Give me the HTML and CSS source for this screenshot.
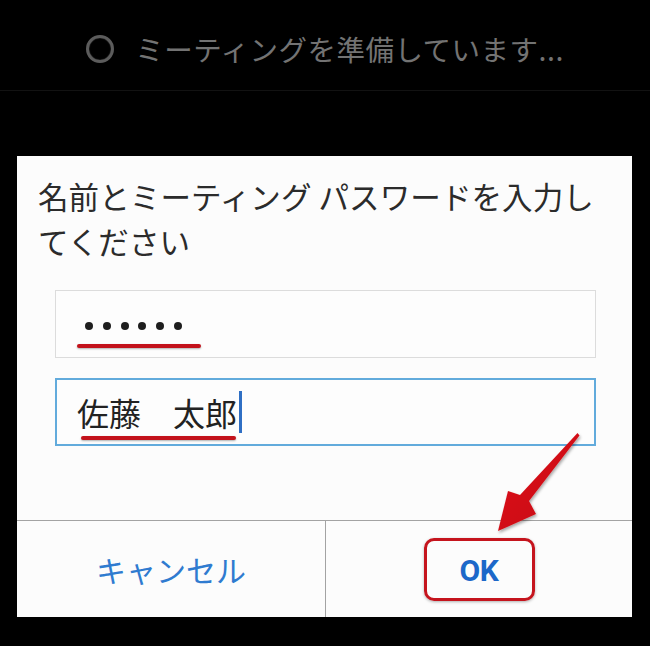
FILE: index.html
```html
<!DOCTYPE html>
<html lang="ja">
<head>
<meta charset="utf-8">
<title>ミーティング</title>
<link rel="stylesheet" href="styles.css">
</head>
<body>
<div class="screen">
  <header class="topbar">
    <span class="spinner"></span>
    <span class="status">ミーティングを準備しています...</span>
  </header>

  <section class="dialog">
    <h1 class="title">名前とミーティング パスワードを入力してください</h1>

    <div class="field">
      <div class="dots">
        <span class="dot"></span><span class="dot"></span><span class="dot"></span><span class="dot"></span><span class="dot"></span><span class="dot"></span>
      </div>
      <div class="mark mark-pass"></div>
    </div>

    <div class="field field-active">
      <div class="name"><span class="name-text">佐藤　太郎</span><span class="caret"></span></div>
      <div class="mark mark-name"></div>
    </div>

    <div class="actions">
      <div class="action"><span class="cancel">キャンセル</span></div>
      <div class="action action-ok"><span class="ok-box"><span class="ok">OK</span></span></div>
    </div>
  </section>

  <svg class="arrow" width="650" height="646" viewBox="0 0 650 646" aria-hidden="true">
    <defs>
      <filter id="sh" x="-20%" y="-20%" width="140%" height="140%">
        <feDropShadow dx="1" dy="2" stdDeviation="1.5" flood-color="#000" flood-opacity="0.35"/>
      </filter>
      <linearGradient id="rg" x1="0" y1="0" x2="1" y2="1">
        <stop offset="0" stop-color="#e0141e"/>
        <stop offset="1" stop-color="#c40a12"/>
      </linearGradient>
    </defs>
    <polygon filter="url(#sh)" fill="url(#rg)" points="577.5,433 579.5,435.5 529,501 536,514 498,531 508,491 520,495"/>
  </svg>
</div>
</body>
</html>
```

FILE: styles.css
```css
* { box-sizing: border-box; }

html, body {
  margin: 0;
  padding: 0;
  background: #000;
}

.screen {
  position: relative;
  width: 650px;
  height: 646px;
  background: #000;
  overflow: hidden;
  font-family: "Noto Sans CJK JP", "Noto Sans", sans-serif;
}

.topbar {
  height: 91px;
  padding-top: 8px;
  border-bottom: 1px solid #121212;
  display: flex;
  align-items: center;
  justify-content: center;
  gap: 21px;
}

.spinner {
  width: 28px;
  height: 28px;
  border-radius: 50%;
  border: 3px solid #5c5c5c;
  box-shadow: inset 0 0 1px #888;
  flex: none;
}

.status {
  font-size: 28.5px;
  color: #737373;
  letter-spacing: 0.5px;
  line-height: 1;
}

.dialog {
  margin: 65px 0 0 17px;
  width: 615px;
  height: 461px;
  background: #fcfcfc;
  display: flex;
  flex-direction: column;
}

.title {
  margin: 0;
  padding: 18px 21px 0 21px;
  font-size: 30.5px;
  font-weight: 400;
  line-height: 45px;
  color: #2b2b2b;
  letter-spacing: 0.1px;
}

.field {
  margin: 26px 0 0 38px;
  width: 541px;
  height: 68px;
  border: 1px solid #dcdcdc;
  background: #fdfdfd;
  padding: 31px 0 0 21px;
}

.field-active {
  margin-top: 20px;
  border: 2px solid #62abdc;
  padding: 14px 0 0 20px;
}

.dots {
  display: flex;
  gap: 9.8px;
  padding-left: 8px;
  height: 8px;
}

.dot {
  width: 8px;
  height: 8px;
  border-radius: 50%;
  background: #1e1e1e;
}

.mark {
  height: 4px;
  background: #c3121b;
  border-radius: 2px;
  box-shadow: 0 1px 2px rgba(0, 0, 0, 0.3);
}

.mark-pass {
  margin-top: 14px;
  width: 124px;
}

.mark-name {
  margin: 6px 0 0 4px;
  width: 155px;
}

.name {
  display: flex;
  align-items: center;
  height: 36px;
}

.name-text {
  font-size: 32px;
  line-height: 36px;
  color: #222;
}

.caret {
  width: 3px;
  height: 42px;
  margin-left: 2px;
  background: #2f6fc4;
}

.actions {
  margin-top: auto;
  height: 97px;
  border-top: 1px solid #a3a3a3;
  display: grid;
  grid-template-columns: 308px 1fr;
}

.action {
  display: flex;
  align-items: center;
  justify-content: center;
}

.action-ok {
  border-left: 1px solid #a3a3a3;
}

.cancel {
  font-size: 30px;
  color: #2f7bd0;
  line-height: 1;
}

.ok-box {
  width: 111px;
  height: 63px;
  border: 3px solid #c5141d;
  border-radius: 10px;
  box-shadow: 0 1px 3px rgba(0, 0, 0, 0.3);
  display: flex;
  align-items: center;
  justify-content: center;
}

.ok {
  font-family: Roboto, "Liberation Sans", sans-serif;
  font-weight: 700;
  font-size: 30px;
  color: #1c68c9;
  line-height: 1;
  margin-top: 3px;
  letter-spacing: -0.5px;
}

.arrow {
  position: absolute;
  left: 0;
  top: 0;
  pointer-events: none;
}
```
